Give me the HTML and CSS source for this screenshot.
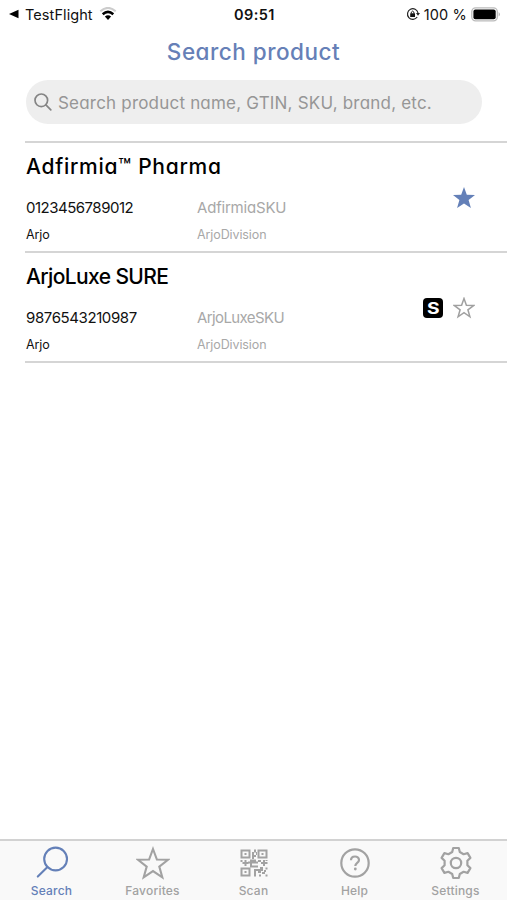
FILE: index.html
```html
<!DOCTYPE html>
<html lang="en">
<head>
<meta charset="utf-8">
<title>Search product</title>
<link rel="stylesheet" href="styles.css">
</head>
<body>
<div class="app">
  <header class="status">
    <div class="status-left">
      <svg width="10" height="10" viewBox="0 0 10 10"><path d="M0 5L9.500.8V9.200Z"/></svg>
      <span class="carrier">TestFlight</span>
      <svg class="wifi" width="18" height="14" viewBox="0 0 18 14" fill="none"><path d="M1.300 4.300Q9-2.500 16.700 4.300" stroke="#ccc" stroke-width="2"/><path d="M3.700 7.300Q9 2.500 14.300 7.300" stroke="#000" stroke-width="2.500"/><path d="M5.900 9.500Q9 7 12.100 9.500L9 13Z" fill="#000"/></svg>
    </div>
    <span class="time">09:51</span>
    <div class="status-right">
      <svg width="14" height="14" viewBox="0 0 14 14" fill="none"><path d="M11.200 10A5.300 5.300 0 1 1 12 6" stroke="#222" stroke-width="1.200"/><path d="M10 6H14L12 8.700Z" fill="#222"/><path d="M4.200 6.300H9V10H4.200Z" fill="#111"/><path d="M5.300 6.500V5.200Q6.600 3 7.900 5.200V6.500" stroke="#111"/></svg>
      <span class="percent">100 %</span>
      <svg width="30" height="15" viewBox="0 0 30 15"><rect x=".8" y=".8" width="25.500" height="13" rx="3.800" fill="#fff" stroke="#bbb" stroke-width="1.300"/><rect x="2.400" y="2.400" width="22.300" height="9.800" rx="2"/><path d="M27.700 5Q30 7.300 27.700 9.600Z" fill="#aaa"/></svg>
    </div>
  </header>
  <h1 class="title"><span>Search product</span></h1>
  <div class="search">
    <svg width="18" height="18" viewBox="0 0 18 18" fill="none" stroke="#858585" stroke-width="1.700" stroke-linecap="round"><circle cx="7.300" cy="7.300" r="6.300"/><path d="M11.900 11.900L16.800 16.800"/></svg>
    <span class="hint">Search product name, GTIN, SKU, brand, etc.</span>
  </div>
  <main class="list">
    <article class="item">
      <div class="info">
        <h2 class="name name-a">Adfirmia™ Pharma</h2>
        <div class="row codes"><span class="gtin-a">0123456789012</span><span class="muted sku-a">AdfirmiaSKU</span></div>
        <div class="row brands"><span>Arjo</span><span class="muted">ArjoDivision</span></div>
      </div>
      <div class="marks">
        <svg width="22" height="22" viewBox="0 0 22 22"><path d="M11 0L13.800 7.700L22 8L15.600 13L17.900 21L11 16.400L4.100 21L6.400 13L0 8L8.200 7.700Z" fill="#6480b8"/></svg>
      </div>
    </article>
    <article class="item">
      <div class="info">
        <h2 class="name name-b">ArjoLuxe SURE</h2>
        <div class="row codes"><span class="gtin-b">9876543210987</span><span class="muted sku-b">ArjoLuxeSKU</span></div>
        <div class="row brands"><span>Arjo</span><span class="muted">ArjoDivision</span></div>
      </div>
      <div class="marks">
        <span class="badge"><span class="badge-letter">S</span></span>
        <svg width="22" height="22" viewBox="0 0 22 22"><path d="M11 1.500L13.400 8.200L20.600 8.500L14.900 12.800L16.900 19.800L11 15.700L5.100 19.800L7.100 12.800L1.400 8.500L8.600 8.200Z" fill="none" stroke="#a0a0a0" stroke-width="1.500"/></svg>
      </div>
    </article>
  </main>
  <nav class="tabs">
    <div class="tab active">
      <svg width="34" height="34" viewBox="0 0 34 34" fill="none" stroke="currentColor" stroke-width="2.100" stroke-linecap="round"><circle cx="20.600" cy="13" r="11.400"/><path d="M12.500 21.100L2.800 30.600"/></svg>
      <span>Search</span>
    </div>
    <div class="tab">
      <svg width="34" height="34" viewBox="0 0 34 34" fill="none" stroke="currentColor" stroke-width="2.100"><path d="M17 3L20.900 13.500L32 13.800L23.300 20.600L26.300 31.300L17 25.100L7.700 31.300L10.700 20.600L2 13.800L13.100 13.500Z"/></svg>
      <span>Favorites</span>
    </div>
    <div class="tab">
      <svg width="34" height="34" viewBox="0 0 34 34" fill="currentColor"><path fill-rule="evenodd" d="M3.500 3.500h10v9h-10zM5.500 5.500v5h6v-5zM20.500 3.500h10v9h-10zM22.500 5.500v5h6v-5zM3.500 21.500h10v9h-10zM5.500 23.500v5h6v-5z"/><path d="M7.500 7h2v2h-2zM24.500 7h2v2h-2zM7.500 25h2v2h-2zM17 3.500h2v3h-2zM15 6h2v3h2v2h-2v2h-2zM19 6h1v3h-1zM3.500 14h2v2h-2zM7.500 14h2v2h2v2h-2v2h-2v-2h-2v-2h2zM13 13.500h6v2h2v2h-6v2h6v2h-8v-4h-2v-2h2zM21 14h3v2h-3zM26 14h2v2h2.500v2h-2.500v2h-2v-2h-2v-2h2zM28.500 14h2v1h-2zM17 23h6v-2h3v4h-2v2h-3v-2h-2v5.500h-2zM22 28.500h2v2h-2zM25 26h3v2h-3zM28.500 21.500h2v2h-2zM27 24h2v2h-2zM28.500 28.500h2v2h-2z"/></svg>
      <span>Scan</span>
    </div>
    <div class="tab">
      <svg width="34" height="34" viewBox="0 0 34 34" fill="none" stroke="currentColor" stroke-width="2.200"><circle cx="17" cy="17" r="13.700"/><path d="M13 14.300C13 9.300 21 9.300 21 14C21 17 17.300 16.800 17.300 20"/><circle cx="17.300" cy="23" r="1.400" fill="currentColor" stroke="none"/></svg>
      <span>Help</span>
    </div>
    <div class="tab">
      <svg width="34" height="34" viewBox="-17 -17 34 34" fill="none" stroke="currentColor" stroke-width="2.200" stroke-linejoin="round"><path d="M-3.800-11L-2.800-15H2.800L3.800-11L7.600-8.800L11.600-9.900L14.400-5.100L11.400-2.200V2.200L14.400 5.100L11.600 9.900L7.600 8.800L3.800 11L2.800 15H-2.800L-3.800 11L-7.600 8.800L-11.600 9.900L-14.400 5.100L-11.400 2.200V-2.200L-14.400-5.100L-11.600-9.900L-7.600-8.800Z"/><circle r="5.200"/></svg>
      <span>Settings</span>
    </div>
  </nav>
</div>
</body>
</html>
```
FILE: styles.css
```css
* { box-sizing: border-box; }
body { margin: 0; background: #fff; color: #111; font-family: Inter, "Liberation Sans", sans-serif; }
svg { display: block; flex: none; }
h1, h2 { margin: 0; }
span { white-space: nowrap; }
.app { display: flex; flex-direction: column; height: 900px; width: 507px; }
.status { display: grid; grid-template-columns: 233px auto 1fr; align-items: center; height: 28px; padding: 0 6px 0 9px; font-size: 14.5px; }
.status-left, .status-right { display: flex; align-items: center; }
.status-left { gap: 6px; }
.status-right { justify-content: flex-end; gap: 4px; }
.carrier { letter-spacing: 0.08px; }
.time { margin-left: -8px; font-weight: 600; letter-spacing: 0.4px; }
.percent { letter-spacing: 0.15px; }
.title { height: 52px; line-height: 48px; text-align: center; font-size: 22.5px; font-weight: 500; letter-spacing: 0.5px; color: #6680b7; font-feature-settings: "cv11"; }
.search { display: flex; align-items: center; gap: 6px; height: 44px; margin: 0 25px 0 26px; padding-left: 8px; border-radius: 22px; background: #eee; color: #969696; font-size: 17px; line-height: 24px; letter-spacing: 0.2px; font-feature-settings: "cv11"; }
.hint { padding-top: 1px; }
.list { margin: 17px 0 0 25px; border-top: 2px solid #d5d5d5; font-feature-settings: "cv11"; }
.item { display: flex; justify-content: space-between; height: 110px; padding: 0 32px 0 1px; border-bottom: 2px solid #d5d5d5; }
.name { height: 48px; line-height: 48px; font-size: 21px; font-weight: 500; color: #000; white-space: nowrap; }
.name-a { letter-spacing: 0.72px; }
.name-b { letter-spacing: -0.62px; }
.row { display: grid; grid-template-columns: 171px 140px; }
.codes { height: 34px; line-height: 34px; font-size: 15px; }
.gtin-a { letter-spacing: -0.5px; }
.gtin-b { letter-spacing: -0.4px; }
.sku-a { letter-spacing: -0.2px; }
.sku-b { letter-spacing: -0.6px; }
.brands { height: 20px; line-height: 20px; font-size: 12.5px; letter-spacing: -0.1px; }
.muted { color: #a8a8a8; }
.marks { display: flex; align-items: center; gap: 10px; padding-top: 2px; }
.badge { display: grid; place-items: center; width: 20px; height: 20px; border-radius: 4px; background: #000; color: #fff; font-size: 16px; font-weight: 700; line-height: 20px; }
.badge-letter { transform: scaleX(1.2); }
.tabs { display: grid; grid-template-columns: repeat(5, 101px); justify-content: center; height: 61px; margin-top: auto; padding-top: 5px; border-top: 2px solid #d2d2d2; background: #f9f9f9; }
.tab { display: flex; flex-direction: column; align-items: center; color: #a2a2a2; font-size: 12px; font-weight: 500; letter-spacing: 0.2px; }
.tab span { line-height: 22px; }
.tab.active { color: #6480b8; }
```
